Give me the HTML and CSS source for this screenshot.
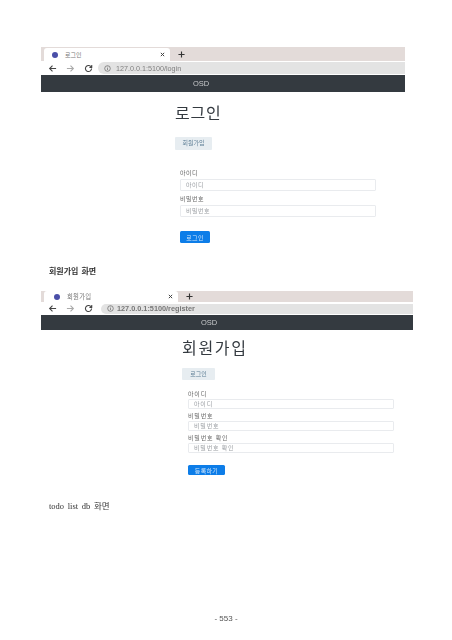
FILE: index.html
```html
<!DOCTYPE html>
<html lang="ko">
<head>
  <meta charset="UTF-8">
  <meta name="viewport" content="width=device-width, initial-scale=1.0">
  <title>553</title>
  <link rel="stylesheet" href="styles.css">
</head>
<body>
  <div class="sheet">

    <!-- 로그인 화면 -->
    <div class="shot shot-login">
      <div class="tabstrip">
        <div class="tab">
          <span class="favicon"></span>
          <span class="tab-title">로그인</span>
          <svg class="tab-close" viewBox="0 0 6 6"><path d="M1 1l4 4M5 1L1 5"/></svg>
        </div>
        <svg class="tab-new" viewBox="0 0 8 8"><path d="M4 0.5v7M0.5 4h7"/></svg>
      </div>
      <div class="toolbar">
        <svg class="nav-icon" viewBox="0 0 10 10"><path d="M9 5H2M5 1.8L1.8 5 5 8.2"/></svg>
        <svg class="nav-icon nav-off" viewBox="0 0 10 10"><path d="M1 5h7M5 1.8L8.2 5 5 8.2"/></svg>
        <svg class="nav-icon" viewBox="0 0 10 10"><path d="M8.4 5a3.4 3.4 0 1 1-1-2.4L8.6 3.8M8.6 1.2v2.6H6"/></svg>
        <div class="omnibox">
          <svg class="info-icon" viewBox="0 0 8 8"><circle cx="4" cy="4" r="3.2"/><path d="M4 3.5v2.3M4 2v0.8"/></svg>
          <span class="url">127.0.0.1:5100/login</span>
        </div>
      </div>
      <div class="navbar">OSD</div>
      <div class="content">
        <h1 class="title">로그인</h1>
        <a class="btn-light">회원가입</a>
        <form class="form">
          <label class="field-label">아이디</label>
          <input class="field" placeholder="아이디">
          <label class="field-label">비밀번호</label>
          <input class="field" placeholder="비밀번호">
          <button class="btn-primary" type="button">로그인</button>
        </form>
      </div>
    </div>

    <p class="caption caption-register">회원가입 화면</p>

    <!-- 회원가입 화면 -->
    <div class="shot shot-register">
      <div class="tabstrip">
        <div class="tab">
          <span class="favicon"></span>
          <span class="tab-title">회원가입</span>
          <svg class="tab-close" viewBox="0 0 6 6"><path d="M1 1l4 4M5 1L1 5"/></svg>
        </div>
        <svg class="tab-new" viewBox="0 0 8 8"><path d="M4 0.5v7M0.5 4h7"/></svg>
      </div>
      <div class="toolbar">
        <svg class="nav-icon" viewBox="0 0 10 10"><path d="M9 5H2M5 1.8L1.8 5 5 8.2"/></svg>
        <svg class="nav-icon nav-off" viewBox="0 0 10 10"><path d="M1 5h7M5 1.8L8.2 5 5 8.2"/></svg>
        <svg class="nav-icon" viewBox="0 0 10 10"><path d="M8.4 5a3.4 3.4 0 1 1-1-2.4L8.6 3.8M8.6 1.2v2.6H6"/></svg>
        <div class="omnibox">
          <svg class="info-icon" viewBox="0 0 8 8"><circle cx="4" cy="4" r="3.2"/><path d="M4 3.5v2.3M4 2v0.8"/></svg>
          <span class="url">127.0.0.1:5100/register</span>
        </div>
      </div>
      <div class="navbar">OSD</div>
      <div class="content">
        <h1 class="title">회원가입</h1>
        <a class="btn-light">로그인</a>
        <form class="form">
          <label class="field-label">아이디</label>
          <input class="field" placeholder="아이디">
          <label class="field-label">비밀번호</label>
          <input class="field" placeholder="비밀번호">
          <label class="field-label">비밀번호 확인</label>
          <input class="field" placeholder="비밀번호 확인">
          <button class="btn-primary" type="button">등록하기</button>
        </form>
      </div>
    </div>

    <p class="caption caption-todo">todo list db 화면</p>

    <p class="page-number">- 553 -</p>
  </div>
</body>
</html>
```

FILE: styles.css
```css
html, body {
  margin: 0;
  background-color: #fff;
}
.sheet {
  width: 452px;
  height: 640px;
  padding-top: 47px;
  box-sizing: border-box;
  overflow: hidden;
  font-family: "Liberation Sans", "Noto Sans CJK KR", sans-serif;
  color: #343a40;
  filter: blur(0.45px);
}

/* 캡처 이미지 */
.shot { margin-left: 41px; }
.shot-login { width: 364px; }
.shot-register { width: 372px; }

.tabstrip {
  display: flex;
  align-items: flex-end;
  height: 14px;
  padding-left: 3px;
  background-color: #e3dbd9;
}
.shot-register .tabstrip { height: 11px; }
.tab {
  display: flex;
  align-items: center;
  width: 126px;
  height: 13px;
  padding: 0 5px 0 8px;
  box-sizing: border-box;
  background-color: #fff;
  border-radius: 3px 3px 0 0;
}
.shot-register .tab {
  width: 134px;
  height: 11px;
  padding-left: 10px;
}
.favicon {
  width: 6px;
  height: 6px;
  border-radius: 50%;
  background-color: #4a4fa8;
}
.tab-title {
  margin-left: 7px;
  font-size: 6px;
  color: #777;
}
.shot-register .tab-title {
  font-size: 6.4px;
  letter-spacing: 0.2px;
}
.tab-close {
  width: 5px;
  height: 5px;
  margin-left: auto;
  fill: none;
  stroke: #444;
  stroke-width: 1.2;
}
.tab-new {
  width: 7px;
  height: 7px;
  margin: 0 0 3px 8px;
  fill: none;
  stroke: #333;
  stroke-width: 1.3;
}
.shot-register .tab-new { margin-bottom: 2px; }

.toolbar {
  display: flex;
  align-items: center;
  height: 14px;
  padding-left: 7px;
  background-color: #fff;
}
.shot-register .toolbar { height: 13px; }
.nav-icon {
  width: 9px;
  height: 9px;
  margin-right: 9px;
  fill: none;
  stroke: #444;
  stroke-width: 1.2;
}
.nav-off { stroke: #aaa; }
.omnibox {
  display: flex;
  align-items: center;
  flex: 1;
  height: 12px;
  margin-left: -4px;
  padding-left: 6px;
  background-color: #e3e3e3;
  border-radius: 6px 0 0 6px;
}
.shot-register .omnibox {
  margin-left: -1px;
  height: 10px;
}
.info-icon {
  width: 7px;
  height: 7px;
  fill: none;
  stroke: #666;
  stroke-width: 0.8;
}
.url {
  margin-left: 5px;
  font-size: 7.2px;
  color: #808080;
}
.shot-register .url {
  margin-left: 3px;
  font-size: 7.3px;
  font-weight: bold;
  color: #777;
}

.navbar {
  height: 17px;
  padding-left: 152px;
  background-color: #343a40;
  color: #c8cacc;
  font-size: 7.5px;
  line-height: 17px;
}
.shot-register .navbar {
  height: 15px;
  padding-left: 160px;
  line-height: 15px;
}

.content { padding-left: 134px; }
.shot-register .content { padding-left: 141px; }
.title {
  margin: 12px 0 13px;
  font-size: 16px;
  font-weight: 400;
  line-height: 20px;
  letter-spacing: 0.8px;
}
.shot-register .title {
  margin: 9px 0 9px;
  letter-spacing: 1.7px;
}
.btn-light {
  display: block;
  width: 37px;
  height: 13px;
  background-color: #e7edf1;
  border-radius: 1px;
  color: #5f7f96;
  font-size: 6px;
  line-height: 13px;
  text-align: center;
}
.shot-register .btn-light {
  width: 33px;
  height: 12px;
  line-height: 12px;
}

.form {
  display: flex;
  flex-direction: column;
  align-items: flex-start;
  margin: 18px 0 0 5px;
}
.shot-register .form { margin: 10px 0 0 6px; }
.field-label {
  height: 11px;
  margin-top: 3px;
  font-size: 6px;
  line-height: 11px;
  color: #666;
  letter-spacing: 0.5px;
}
.form .field-label:first-child { margin-top: 0; }
.shot-register .field-label {
  height: 9px;
  line-height: 9px;
  letter-spacing: 0.8px;
}
.field {
  width: 196px;
  height: 12px;
  padding: 0 5px;
  box-sizing: border-box;
  border: 1px solid #e9ebee;
  border-radius: 1px;
  font-family: inherit;
  font-size: 6px;
  letter-spacing: 0.5px;
  outline: none;
}
.shot-register .field {
  width: 206px;
  height: 10px;
  letter-spacing: 0.8px;
}
.field::placeholder { color: #9a9ea3; }
.btn-primary {
  width: 30px;
  height: 12px;
  margin-top: 14px;
  padding: 0;
  border: none;
  border-radius: 1.5px;
  background-color: #0d7de8;
  color: #cfe5fb;
  font-family: inherit;
  font-size: 6px;
  letter-spacing: 0.3px;
}
.shot-register .btn-primary {
  width: 37px;
  height: 10px;
  margin-top: 12px;
}

/* 문서 본문 */
.caption {
  margin: 0 0 0 49px;
  font-family: "Liberation Serif", "Noto Sans CJK KR", serif;
  font-size: 8px;
  line-height: 10px;
  color: #333;
}
.caption-register {
  margin-top: 24px;
  margin-bottom: 14px;
  font-weight: bold;
  word-spacing: 1px;
}
.caption-todo {
  margin-top: 26px;
  font-size: 8.5px;
  word-spacing: 1.5px;
}
.page-number {
  margin: 103px 0 0;
  font-size: 8px;
  line-height: 10px;
  text-align: center;
  color: #555;
}
```
